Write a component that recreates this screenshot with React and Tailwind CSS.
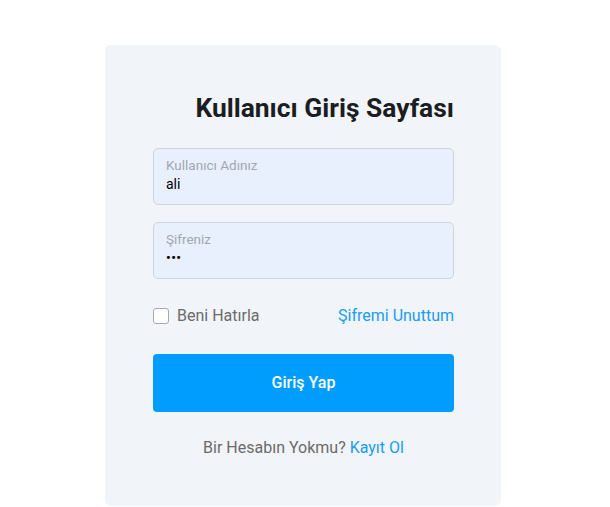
import React, { useState } from 'react';

export default function App() {
  const [remember, setRemember] = useState(false);

  return (
    <div className="min-h-[507px] bg-white pt-[45px] font-['Roboto',sans-serif]">
      <div className="ml-[105px] w-[396px] rounded-[6px] bg-[#f1f4f8] pl-[48px] pr-[47px] pt-[47px] pb-[46px]">
        {/* Başlık */}
        <h1 className="text-right text-[26.4px] leading-[32px] font-bold text-[#1b1d22]">
          Kullanıcı Giriş Sayfası
        </h1>

        {/* Kullanıcı adı */}
        <div className="mt-[24px] h-[57px] rounded-[5px] border border-[#cfd5de] bg-[#e8f0fe] px-[12px] pt-[8px]">
          <p className="text-[13.5px] leading-[16px] text-[#a3a7ae]">Kullanıcı Adınız</p>
          <p className="mt-px text-[14px] leading-[20px] text-black">ali</p>
        </div>

        {/* Şifre */}
        <div className="mt-[17px] h-[57px] rounded-[5px] border border-[#cfd5de] bg-[#e8f0fe] px-[12px] pt-[8px]">
          <p className="text-[13.5px] leading-[16px] text-[#a3a7ae]">Şifreniz</p>
          <p className="mt-px text-[13px] leading-[20px] font-bold tracking-[0.5px] text-black">•••</p>
        </div>

        {/* Beni hatırla / şifremi unuttum */}
        <div className="mt-[25px] flex h-[24px] items-center justify-between">
          <label className="flex items-center gap-[8px] text-[16px] text-[#6b6b6b]">
            <span
              onClick={() => setRemember(!remember)}
              className="h-[16px] w-[16px] rounded-[3px] border border-[#a9a9a9] bg-white"
            />
            Beni Hatırla
          </label>
          <a href="#" className="text-[16px] text-[#1a9cf2]">Şifremi Unuttum</a>
        </div>

        {/* Giriş */}
        <button className="mt-[26px] flex h-[58px] w-full items-center justify-center rounded-[4px] bg-[#009dff] text-[16px] font-medium text-white">
          Giriş Yap
        </button>

        <p className="mt-[24px] text-center text-[16px] leading-[24px] text-[#6b6b6b]">
          Bir Hesabın Yokmu? <a href="#" className="text-[#1a9cf2]">Kayıt Ol</a>
        </p>
      </div>
    </div>
  );
}
